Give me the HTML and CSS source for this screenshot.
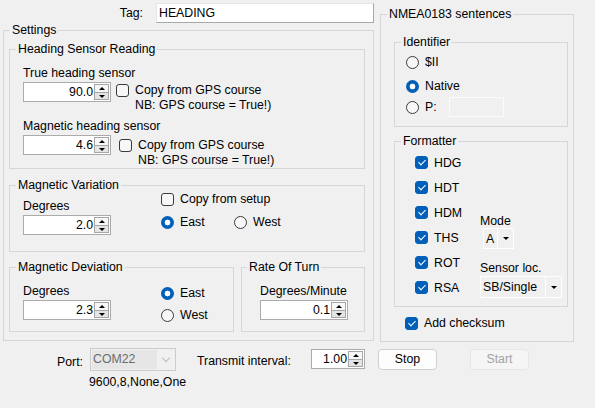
FILE: index.html
```html
<!DOCTYPE html>
<html>
<head>
<meta charset="utf-8">
<title>Heading</title>
<link rel="stylesheet" href="styles.css">
</head>
<body>
<div class="page">
  <div class="top">
    <div class="left">
      <div class="tag-row">
        <span class="tag-lbl">Tag:</span>
        <div class="textbox tag-box">HEADING</div>
      </div>
      <fieldset class="group settings">
        <legend>Settings</legend>
        <div class="settings-body">
          <fieldset class="group heading">
            <legend>Heading Sensor Reading</legend>
            <div class="heading-body">
              <div class="sensor">
                <div class="lbl">True heading sensor</div>
                <div class="sensor-row">
                  <div class="num"><span class="val">90.0</span><span class="spin"><i class="up"></i><i class="dn"></i></span></div>
                  <span class="cb cb-a"></span>
                  <div class="note note-a"><div>Copy from GPS course</div><div>NB: GPS course = True!)</div></div>
                </div>
              </div>
              <div class="sensor sensor-2">
                <div class="lbl">Magnetic heading sensor</div>
                <div class="sensor-row">
                  <div class="num"><span class="val">4.6</span><span class="spin"><i class="up"></i><i class="dn"></i></span></div>
                  <span class="cb cb-b"></span>
                  <div class="note note-b"><div>Copy from GPS course</div><div>NB: GPS course = True!)</div></div>
                </div>
              </div>
            </div>
          </fieldset>
          <fieldset class="group variation">
            <legend>Magnetic Variation</legend>
            <div class="split">
              <div class="col-left var-left">
                <div class="lbl">Degrees</div>
                <div class="num"><span class="val">2.0</span><span class="spin"><i class="up"></i><i class="dn"></i></span></div>
              </div>
              <div class="col-right">
                <div class="opt"><span class="cb"></span><span>Copy from setup</span></div>
                <div class="opt-row">
                  <div class="opt east"><span class="rb on"></span><span>East</span></div>
                  <div class="opt"><span class="rb"></span><span>West</span></div>
                </div>
              </div>
            </div>
          </fieldset>
          <div class="lower">
            <fieldset class="group deviation">
              <legend>Magnetic Deviation</legend>
              <div class="split">
                <div class="col-left dev-left">
                  <div class="lbl">Degrees</div>
                  <div class="num"><span class="val">2.3</span><span class="spin"><i class="up"></i><i class="dn"></i></span></div>
                </div>
                <div class="col-right dev-right">
                  <div class="opt"><span class="rb on"></span><span>East</span></div>
                  <div class="opt west2"><span class="rb"></span><span>West</span></div>
                </div>
              </div>
            </fieldset>
            <fieldset class="group rate">
              <legend>Rate Of Turn</legend>
              <div class="rate-body">
                <div class="lbl">Degrees/Minute</div>
                <div class="num"><span class="val">0.1</span><span class="spin"><i class="up"></i><i class="dn"></i></span></div>
              </div>
            </fieldset>
          </div>
        </div>
      </fieldset>
    </div>
    <div class="right">
      <fieldset class="group nmea">
        <legend>NMEA0183 sentences</legend>
        <fieldset class="group ident">
          <legend>Identifier</legend>
          <div class="ident-body">
            <div class="opt irow"><span class="rb"></span><span>$II</span></div>
            <div class="opt irow irow-2"><span class="rb on"></span><span>Native</span></div>
            <div class="opt irow irow-3"><span class="rb"></span><span class="p-lbl">P:</span><span class="ptext"></span></div>
          </div>
        </fieldset>
        <fieldset class="group fmt">
          <legend>Formatter</legend>
          <div class="fmt-body">
            <div class="checklist">
              <div class="opt crow"><span class="cb on"></span><span>HDG</span></div>
              <div class="opt crow"><span class="cb on"></span><span>HDT</span></div>
              <div class="opt crow"><span class="cb on"></span><span>HDM</span></div>
              <div class="opt crow"><span class="cb on"></span><span>THS</span></div>
              <div class="opt crow"><span class="cb on"></span><span>ROT</span></div>
              <div class="opt crow"><span class="cb on"></span><span>RSA</span></div>
            </div>
            <div class="fmt-right">
              <div class="mode-lbl">Mode</div>
              <div class="flatcombo mode-combo"><span class="fc-text">A</span><span class="fc-btn"></span></div>
              <div class="sensor-lbl">Sensor loc.</div>
              <div class="flatcombo sensor-combo"><span class="fc-text">SB/Single</span><span class="fc-btn"></span></div>
            </div>
          </div>
        </fieldset>
        <div class="opt checksum"><span class="cb on"></span><span>Add checksum</span></div>
      </fieldset>
    </div>
  </div>
  <div class="bottom">
    <span class="port-lbl">Port:</span>
    <div class="port-col">
      <div class="combo-dis"><span class="cd-text">COM22</span><span class="cd-arrow"></span></div>
      <div class="status">9600,8,None,One</div>
    </div>
    <span class="ti-lbl">Transmit interval:</span>
    <div class="num small"><span class="val">1.00</span><span class="spin"><i class="up"></i><i class="dn"></i></span></div>
    <div class="btn stop">Stop</div>
    <div class="btn start">Start</div>
  </div>
</div>
</body>
</html>
```
FILE: styles.css
```css
* { box-sizing: border-box; }
html, body { margin: 0; padding: 0; }
body {
  width: 595px;
  height: 408px;
  overflow: hidden;
  background: #f0f0f0;
  font-family: "Liberation Sans", Arial, sans-serif;
  font-size: 12.3px;
  line-height: 14px;
  color: #000;
}
.page { display: flex; flex-direction: column; }
.top { display: flex; height: 342px; }
.left { margin-left: 3px; width: 371px; }
.right { margin-left: 6px; width: 194px; padding-top: 7px; }

/* tag */
.tag-row { margin-top: 3px; height: 20px; display: flex; justify-content: flex-end; align-items: center; }
.tag-lbl { margin-right: 13px; }
.textbox {
  background: #fff;
  border: 1px solid;
  border-color: #e6e6e6 #a8a8a8 #a8a8a8 #e6e6e6;
  padding: 0 2px;
  line-height: 18px;
}
.tag-box { width: 218px; height: 20px; }

/* group boxes */
.group { border: 1px solid #d6d6d6; margin: 0; padding: 0; min-width: 0; }
.group > legend { padding: 0 2px; margin-left: 6px; line-height: 14px; }

.settings { height: 318px; }
.settings-body { padding: 5px 0 0 5px; }
.heading { width: 356px; height: 127px; }
.heading-body { padding: 10px 0 0 13px; }
.lbl { margin-bottom: 2px; white-space: nowrap; }
.sensor-row { display: flex; align-items: flex-start; }
.sensor-2 { margin-top: 6px; }
.cb-a { margin: 2px 0 0 5px; }
.note { line-height: 15px; white-space: nowrap; }
.note-a { margin: 1px 0 0 6px; }
.cb-b { margin: 4px 0 0 8px; }
.note-b { margin: 3px 0 0 6px; }

.variation { width: 356px; height: 74px; margin-top: 9px; }
.split { display: flex; }
.col-left { width: 151px; padding-left: 13px; }
.var-left { padding-top: 7px; }
.opt { display: flex; align-items: center; gap: 6px; height: 14px; white-space: nowrap; }
.opt-row { display: flex; margin-top: 9px; }
.east { width: 73px; }

.lower { display: flex; gap: 7px; margin-top: 8px; }
.deviation { width: 225px; height: 72px; }
.dev-left { padding-top: 10px; }
.dev-right { padding-top: 12px; }
.west2 { margin-top: 8px; }
.rate { width: 124px; height: 72px; }
.rate > legend { margin-left: 5px; }
.rate-body { padding: 10px 0 0 18px; }

/* numeric up-down */
.num {
  display: flex;
  flex: none;
  width: 88px;
  height: 20px;
  border: 1px solid #ababab;
  background: #fff;
}
.num .val { flex: 1; text-align: right; line-height: 18px; padding-right: 1px; }
.spin { width: 15px; margin: 1px 1px 1px 0; display: flex; flex-direction: column; }
.spin i { flex: 1; position: relative; border: 1px solid #a6a6a6; background: #f7f7f7; }
.spin i.dn { border-top: none; background: #e4e4e4; }
.spin i::after {
  content: "";
  position: absolute;
  left: 4px;
  width: 0;
  height: 0;
  border-left: 3px solid transparent;
  border-right: 3px solid transparent;
}
.spin i.up::after { top: 2px; border-bottom: 3px solid #000; }
.spin i.dn::after { top: 2px; border-top: 3px solid #000; }

/* checkbox and radio */
.cb {
  position: relative;
  flex: none;
  width: 13px;
  height: 13px;
  border: 1px solid #3a3a3a;
  border-radius: 3px;
  background: #f7f7f7;
}
.cb.on { background: #005fb8; border-color: #005fb8; }
.cb.on::after {
  content: "";
  position: absolute;
  left: 4px;
  top: 1px;
  width: 3px;
  height: 6px;
  border: solid #fff;
  border-width: 0 1px 1px 0;
  transform: rotate(45deg);
}
.rb {
  flex: none;
  width: 13px;
  height: 13px;
  border: 1px solid #3a3a3a;
  border-radius: 50%;
  background: #f7f7f7;
}
.rb.on {
  border: none;
  background: radial-gradient(circle at center, #fff 0 2.6px, #005fb8 3.2px);
}

/* NMEA column */
.nmea { height: 335px; }
.ident { margin: 14px 0 0 13px; width: 174px; height: 92px; }
.ident-body { padding: 3px 0 0 11px; }
.irow { height: 20px; }
.irow-2 { margin-top: 4px; }
.irow-3 { margin-top: 1px; }
.p-lbl { width: 18px; }
.ptext { width: 55px; height: 20px; border: 1px solid #fbfbfb; background: #f0f0f0; }

.fmt { margin: 7px 0 0 13px; width: 174px; height: 173px; }
.fmt-body { display: flex; }
.checklist { width: 85px; padding: 2px 0 0 20px; }
.crow { height: 25px; }
.fmt-right { padding-top: 66px; }
.flatcombo { display: flex; border: 1px solid #fff; background: #f0f0f0; }
.fc-text { flex: 1; padding-left: 2px; display: flex; align-items: center; }
.fc-btn { width: 16px; border-left: 1px solid #fff; display: flex; align-items: center; justify-content: center; }
.fc-btn::after {
  content: "";
  width: 0;
  height: 0;
  border-left: 3px solid transparent;
  border-right: 3px solid transparent;
  border-top: 3px solid #000;
}
.mode-combo { margin-left: 3px; width: 31px; height: 21px; }
.sensor-lbl { margin-top: 12px; }
.sensor-combo { margin-top: 1px; width: 82px; height: 22px; }
.checksum { margin: 6px 0 0 24px; height: 20px; }

/* bottom bar */
.bottom { display: flex; align-items: flex-start; margin-top: 6px; padding-left: 57px; }
.port-lbl { width: 33px; margin-top: 7px; }
.port-col { width: 86px; flex: none; }
.combo-dis {
  display: flex;
  width: 86px;
  height: 23px;
  border: 1px solid #cccccc;
  background: #f0f0f0;
  padding: 1px;
}
.cd-text { width: 65px; background: #e6e6e6; color: #6d6d6d; padding-left: 1px; line-height: 19px; }
.cd-arrow { flex: 1; display: flex; align-items: center; justify-content: center; }
.cd-arrow::after {
  content: "";
  width: 5px;
  height: 5px;
  border: solid #bdbdbd;
  border-width: 0 1px 1px 0;
  transform: rotate(45deg);
  margin-top: -3px;
}
.status { margin-top: 4px; margin-left: -1px; white-space: nowrap; }
.ti-lbl { margin: 6px 0 0 21px; width: 114px; flex: none; white-space: nowrap; }
.num.small { width: 54px; margin-top: 1px; }
.btn {
  flex: none;
  width: 59px;
  height: 21px;
  margin-top: 1px;
  border: 1px solid #d0d0d0;
  border-radius: 4px;
  background: #fdfdfd;
  text-align: center;
  line-height: 19px;
}
.stop { margin-left: 13px; }
.start { margin-left: 33px; color: #a3a3a3; background: #f5f5f5; border-color: #e6e6e6; }
```
